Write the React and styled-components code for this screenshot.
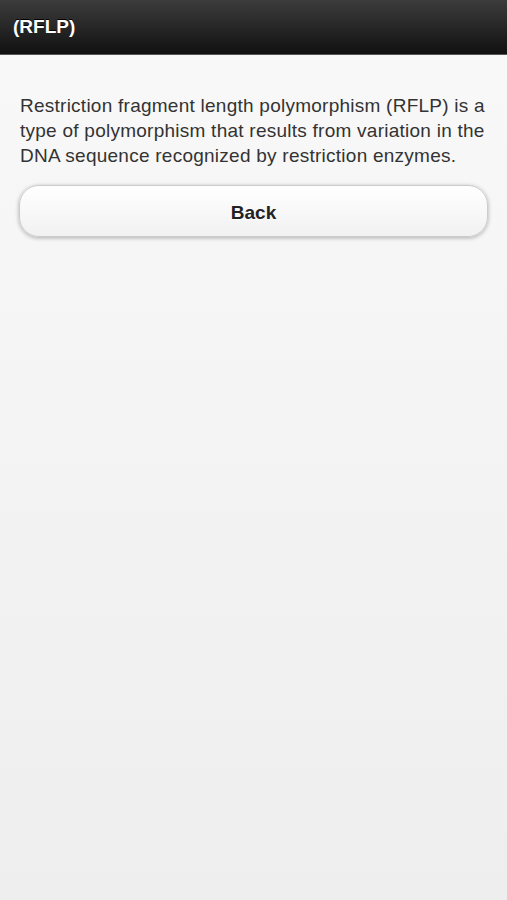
import React from "react";
import styled, { createGlobalStyle } from "styled-components";

const GlobalStyle = createGlobalStyle`
  html, body {
    margin: 0;
    padding: 0;
  }
  body {
    font-family: "Liberation Sans", Arial, sans-serif;
    background: linear-gradient(#f9f9f9, #eeeeee);
    min-height: 900px;
  }
`;

const Page = styled.div`
  display: flex;
  flex-direction: column;
  min-height: 900px;
`;

const Header = styled.header`
  height: 55px;
  display: flex;
  align-items: center;
  padding: 0 13px;
  background: linear-gradient(#3c3c3c, #111111);
  border-bottom: 1px solid #555;
  box-sizing: border-box;
`;

const Title = styled.h1`
  margin: 0;
  color: #fff;
  font-size: 19px;
  font-weight: bold;
  text-shadow: 0 -1px 0 #000;
`;

const Content = styled.main`
  padding: 38px 19px 0 19px;
  display: flex;
  flex-direction: column;
  gap: 17px;
`;

const Text = styled.p`
  margin: 0;
  padding: 0 1px;
  color: #333;
  font-size: 19px;
  letter-spacing: 0.25px;
  line-height: 25px;
`;

const Button = styled.button`
  height: 52px;
  width: 100%;
  border-radius: 20px;
  border: 1px solid #cccccc;
  background: linear-gradient(#ffffff, #f1f1f1);
  box-shadow: 0 1px 4px rgba(0, 0, 0, 0.3);
  font-family: "Liberation Sans", Arial, sans-serif;
  font-size: 19px;
  font-weight: bold;
  color: #222;
  padding-top: 4px;
  text-shadow: 0 1px 0 #fff;
`;

export default function App() {
  return (
    <>
      <GlobalStyle />
      <Page>
        <Header>
          <Title>(RFLP)</Title>
        </Header>
        <Content>
          <Text>
            Restriction fragment length polymorphism (RFLP) is a type of
            polymorphism that results from variation in the DNA sequence
            recognized by restriction enzymes.
          </Text>
          <Button>Back</Button>
        </Content>
      </Page>
    </>
  );
}
